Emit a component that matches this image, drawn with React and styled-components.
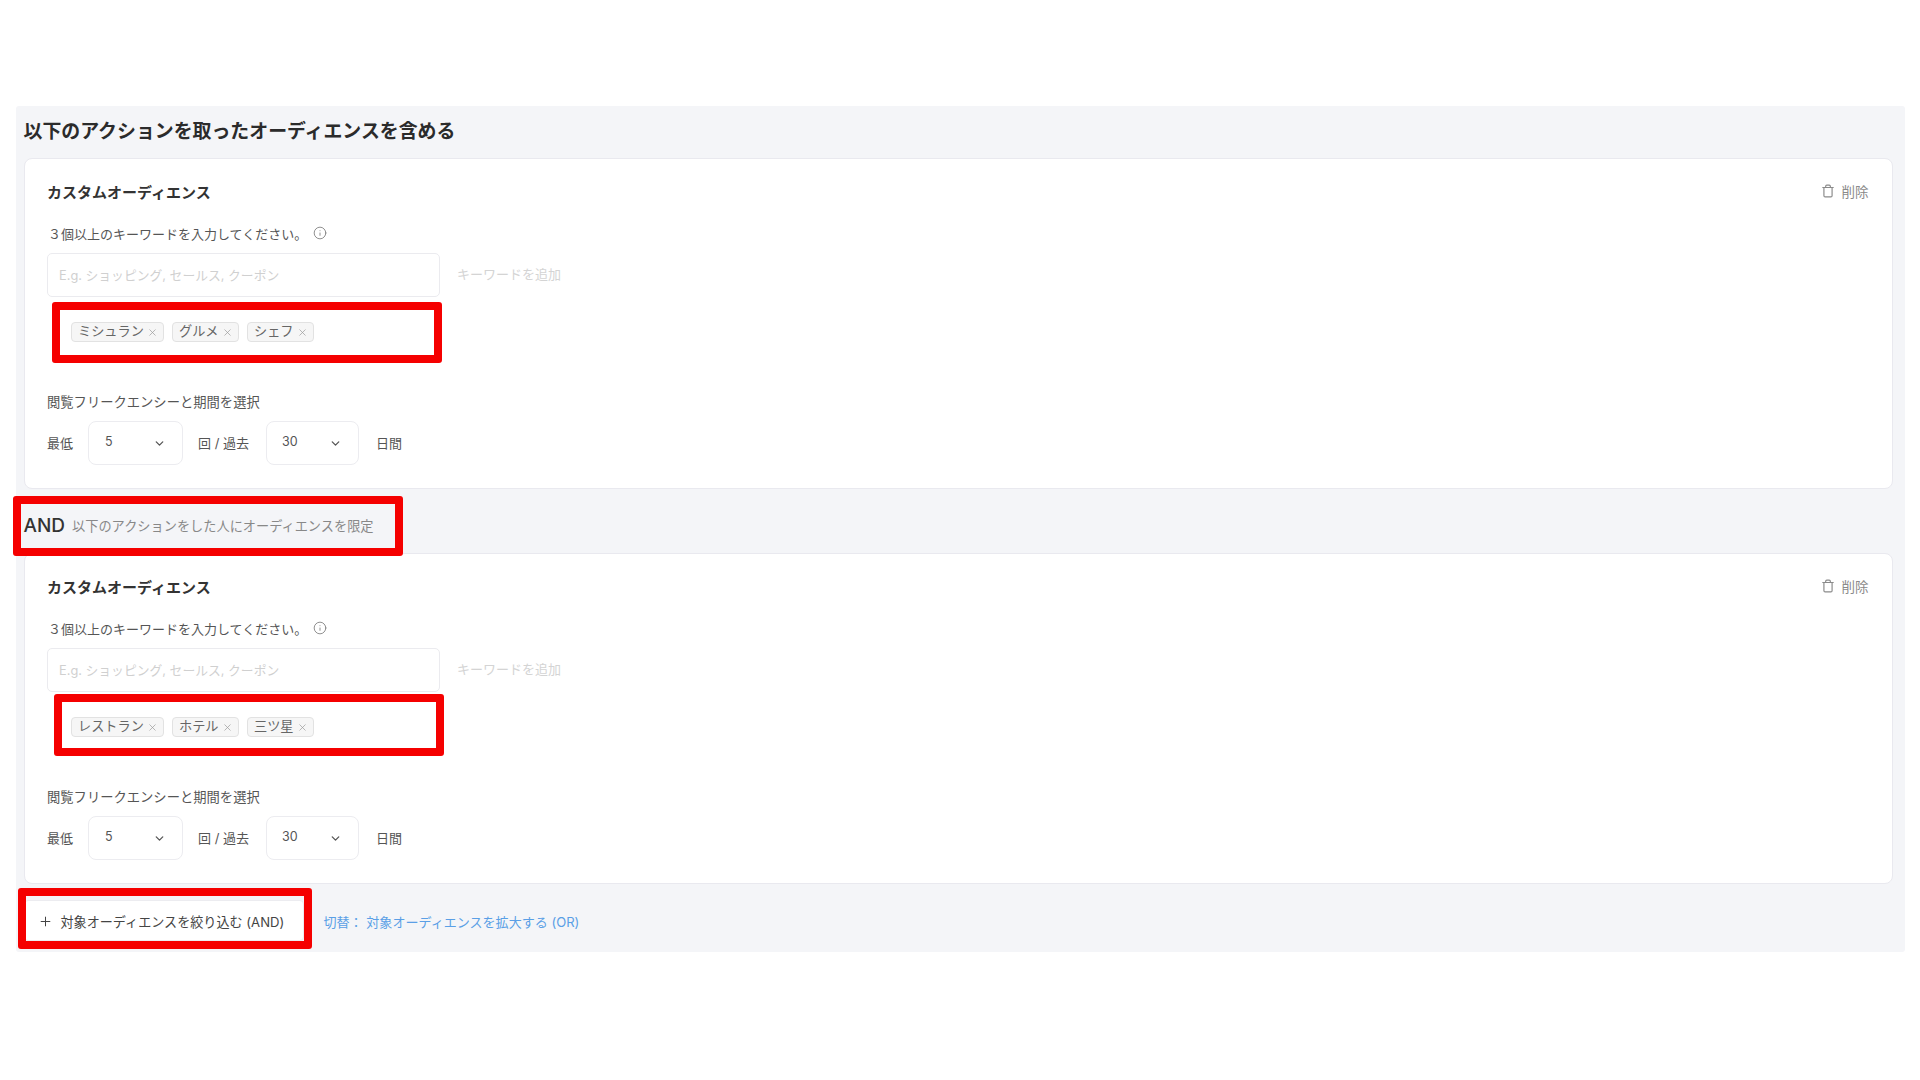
import React from "react";
import styled, { createGlobalStyle } from "styled-components";
import { ChevronDown, Info, Plus, Trash, X } from "lucide-react";

const GlobalStyle = createGlobalStyle`
  html, body {
    margin: 0;
    padding: 0;
    background: #fff;
    font-family: Inter, "Noto Sans CJK JP", sans-serif;
  }
`;

const Page = styled.div`
  width: 1920px;
  height: 1080px;
  padding: 106px 15px 0 15.5px;
  box-sizing: border-box;
  overflow: hidden;
`;

const Panel = styled.section`
  background: #f4f5f8;
  padding: 0 12.5px 0 8px;
  border-radius: 3px;
`;

const Heading = styled.h2`
  height: 52px;
  margin: 0;
  font-size: 18.9px;
  font-weight: 700;
  line-height: 52px;
  color: #2b2b2b;
  white-space: nowrap;
`;

const Card = styled.div`
  height: 331px;
  box-sizing: border-box;
  padding: 24px 23px 23px 22.5px;
  background: #fff;
  border: 1px solid #e9e9ef;
  border-radius: 8px;
`;

const CardHeader = styled.div`
  display: flex;
  align-items: center;
  justify-content: space-between;
  height: 20px;
  margin-top: -2px;
`;

const CardTitle = styled.div`
  font-size: 15px;
  font-weight: 700;
  color: #333;
`;

const DeleteButton = styled.div`
  display: flex;
  align-items: center;
  gap: 7px;
  font-size: 13.5px;
  color: #8a8a8a;
`;

const HelpRow = styled.div`
  display: flex;
  align-items: center;
  gap: 6px;
  height: 20px;
  margin-top: 22px;
  padding-left: 1px;
  font-size: 13px;
  color: #555;
  white-space: nowrap;
`;

const InputRow = styled.div`
  display: flex;
  align-items: center;
  gap: 17px;
  margin-top: 10px;
`;

const KeywordInput = styled.div`
  width: 393px;
  height: 44px;
  box-sizing: border-box;
  padding: 0 0 2px 11px;
  display: flex;
  align-items: center;
  background: #fff;
  border: 1px solid #ebebef;
  border-radius: 5px;
  font-size: 12.8px;
  color: #d0d0d0;
`;

const AddKeyword = styled.div`
  margin-top: -3px;
  font-size: 13px;
  color: #d4d4d4;
`;

const TagArea = styled.div`
  position: relative;
  display: flex;
  align-items: center;
  gap: 8px;
  height: 20px;
  margin-top: 25px;
  padding-left: 24px;
`;

const Tag = styled.span`
  display: flex;
  align-items: center;
  justify-content: space-between;
  width: ${(p) => p.$width}px;
  height: 20px;
  box-sizing: border-box;
  padding: 0 5px 0 6px;
  background: #f6f6f6;
  border: 1px solid #e2e2e2;
  border-radius: 4px;
  font-size: 13.2px;
  line-height: 1;
  color: #666;
  white-space: nowrap;
`;

const Highlight = styled.div`
  position: absolute;
  left: ${(p) => p.$left}px;
  top: ${(p) => p.$top}px;
  width: ${(p) => p.$width}px;
  height: ${(p) => p.$height}px;
  box-sizing: border-box;
  border: 8px solid #f50000;
  border-radius: 3px;
  pointer-events: none;
`;

const FrequencyLabel = styled.div`
  height: 20px;
  margin-top: 50px;
  font-size: 13.3px;
  line-height: 20px;
  color: #555;
  white-space: nowrap;
`;

const FrequencyRow = styled.div`
  display: flex;
  align-items: center;
  margin-top: 9px;
  font-size: 13px;
  color: #555;
`;

const RowText = styled.span`
  width: ${(p) => p.$width}px;
  margin: -2px 0 0 ${(p) => p.$gap}px;
  white-space: nowrap;
`;

const Select = styled.div`
  display: flex;
  align-items: center;
  justify-content: space-between;
  width: ${(p) => p.$width}px;
  height: 44px;
  margin-left: ${(p) => p.$gap}px;
  box-sizing: border-box;
  padding: 0 16px 0 ${(p) => p.$pad}px;
  background: #fff;
  border: 1px solid #ececf0;
  border-radius: 8px;
  font-size: 12.5px;
  color: #555;
`;

const SelectValue = styled.span`
  margin-top: -3px;
`;

const Connector = styled.div`
  position: relative;
  display: flex;
  align-items: center;
  gap: 7px;
  height: 64px;
  padding-top: 9px;
  box-sizing: border-box;
`;

const AndLabel = styled.span`
  font-size: 19px;
  font-weight: 500;
  color: #333;
`;

const ConnectorText = styled.span`
  font-size: 13.2px;
  color: #888;
  white-space: nowrap;
`;

const Footer = styled.div`
  position: relative;
  display: flex;
  align-items: center;
  gap: 20px;
  height: 68px;
`;

const AddButton = styled.div`
  display: flex;
  align-items: center;
  gap: 8px;
  width: 280px;
  height: 41px;
  margin-top: 5px;
  box-sizing: border-box;
  padding: 2px 0 0 13px;
  background: #fff;
  border: 1px solid #ececf0;
  border-radius: 4px;
  font-size: 13.1px;
  color: #444;
  white-space: nowrap;
`;

const SwitchLink = styled.span`
  margin-top: 7px;
  font-size: 13.05px;
  color: #5a9fe6;
  white-space: nowrap;
`;

const AudienceCard = ({ tags, highlight }) => (
  <Card>
    <CardHeader>
      <CardTitle>カスタムオーディエンス</CardTitle>
      <DeleteButton>
        <Trash size={14} strokeWidth={2} />
        削除
      </DeleteButton>
    </CardHeader>
    <HelpRow>
      ３個以上のキーワードを入力してください。
      <Info size={14} strokeWidth={1.4} color="#777" />
    </HelpRow>
    <InputRow>
      <KeywordInput>E.g. ショッピング, セールス, クーポン</KeywordInput>
      <AddKeyword>キーワードを追加</AddKeyword>
    </InputRow>
    <TagArea>
      {tags.map((tag) => (
        <Tag key={tag.label} $width={tag.width}>
          {tag.label}
          <X size={11} strokeWidth={1.5} color="#999" />
        </Tag>
      ))}
      <Highlight {...highlight} />
    </TagArea>
    <FrequencyLabel>閲覧フリークエンシーと期間を選択</FrequencyLabel>
    <FrequencyRow>
      <RowText $width={27} $gap={0}>最低</RowText>
      <Select $width={95} $gap={14} $pad={16}>
        <SelectValue>5</SelectValue>
        <ChevronDown size={13} strokeWidth={2.4} color="#555" />
      </Select>
      <RowText $width={52} $gap={15}>回 / 過去</RowText>
      <Select $width={93} $gap={16} $pad={15}>
        <SelectValue>30</SelectValue>
        <ChevronDown size={13} strokeWidth={2.4} color="#555" />
      </Select>
      <RowText $width={30} $gap={17}>日間</RowText>
    </FrequencyRow>
  </Card>
);

const firstTags = [
  { label: "ミシュラン", width: 93 },
  { label: "グルメ", width: 67 },
  { label: "シェフ", width: 67 },
];

const secondTags = [
  { label: "レストラン", width: 93 },
  { label: "ホテル", width: 67 },
  { label: "三ツ星", width: 67 },
];

export default function App() {
  return (
    <Page>
      <GlobalStyle />
      <Panel>
        <Heading>以下のアクションを取ったオーディエンスを含める</Heading>
        <AudienceCard
          tags={firstTags}
          highlight={{ $left: 5, $top: -20, $width: 390, $height: 61 }}
        />
        <Connector>
          <AndLabel>AND</AndLabel>
          <ConnectorText>以下のアクションをした人にオーディエンスを限定</ConnectorText>
          <Highlight $left={-11} $top={7} $width={390} $height={60} />
        </Connector>
        <AudienceCard
          tags={secondTags}
          highlight={{ $left: 7, $top: -23, $width: 390, $height: 62 }}
        />
        <Footer>
          <AddButton>
            <Plus size={15} strokeWidth={1.6} />
            対象オーディエンスを絞り込む (AND)
          </AddButton>
          <SwitchLink>切替： 対象オーディエンスを拡大する (OR)</SwitchLink>
          <Highlight $left={-6} $top={4} $width={294} $height={61} />
        </Footer>
      </Panel>
    </Page>
  );
}
